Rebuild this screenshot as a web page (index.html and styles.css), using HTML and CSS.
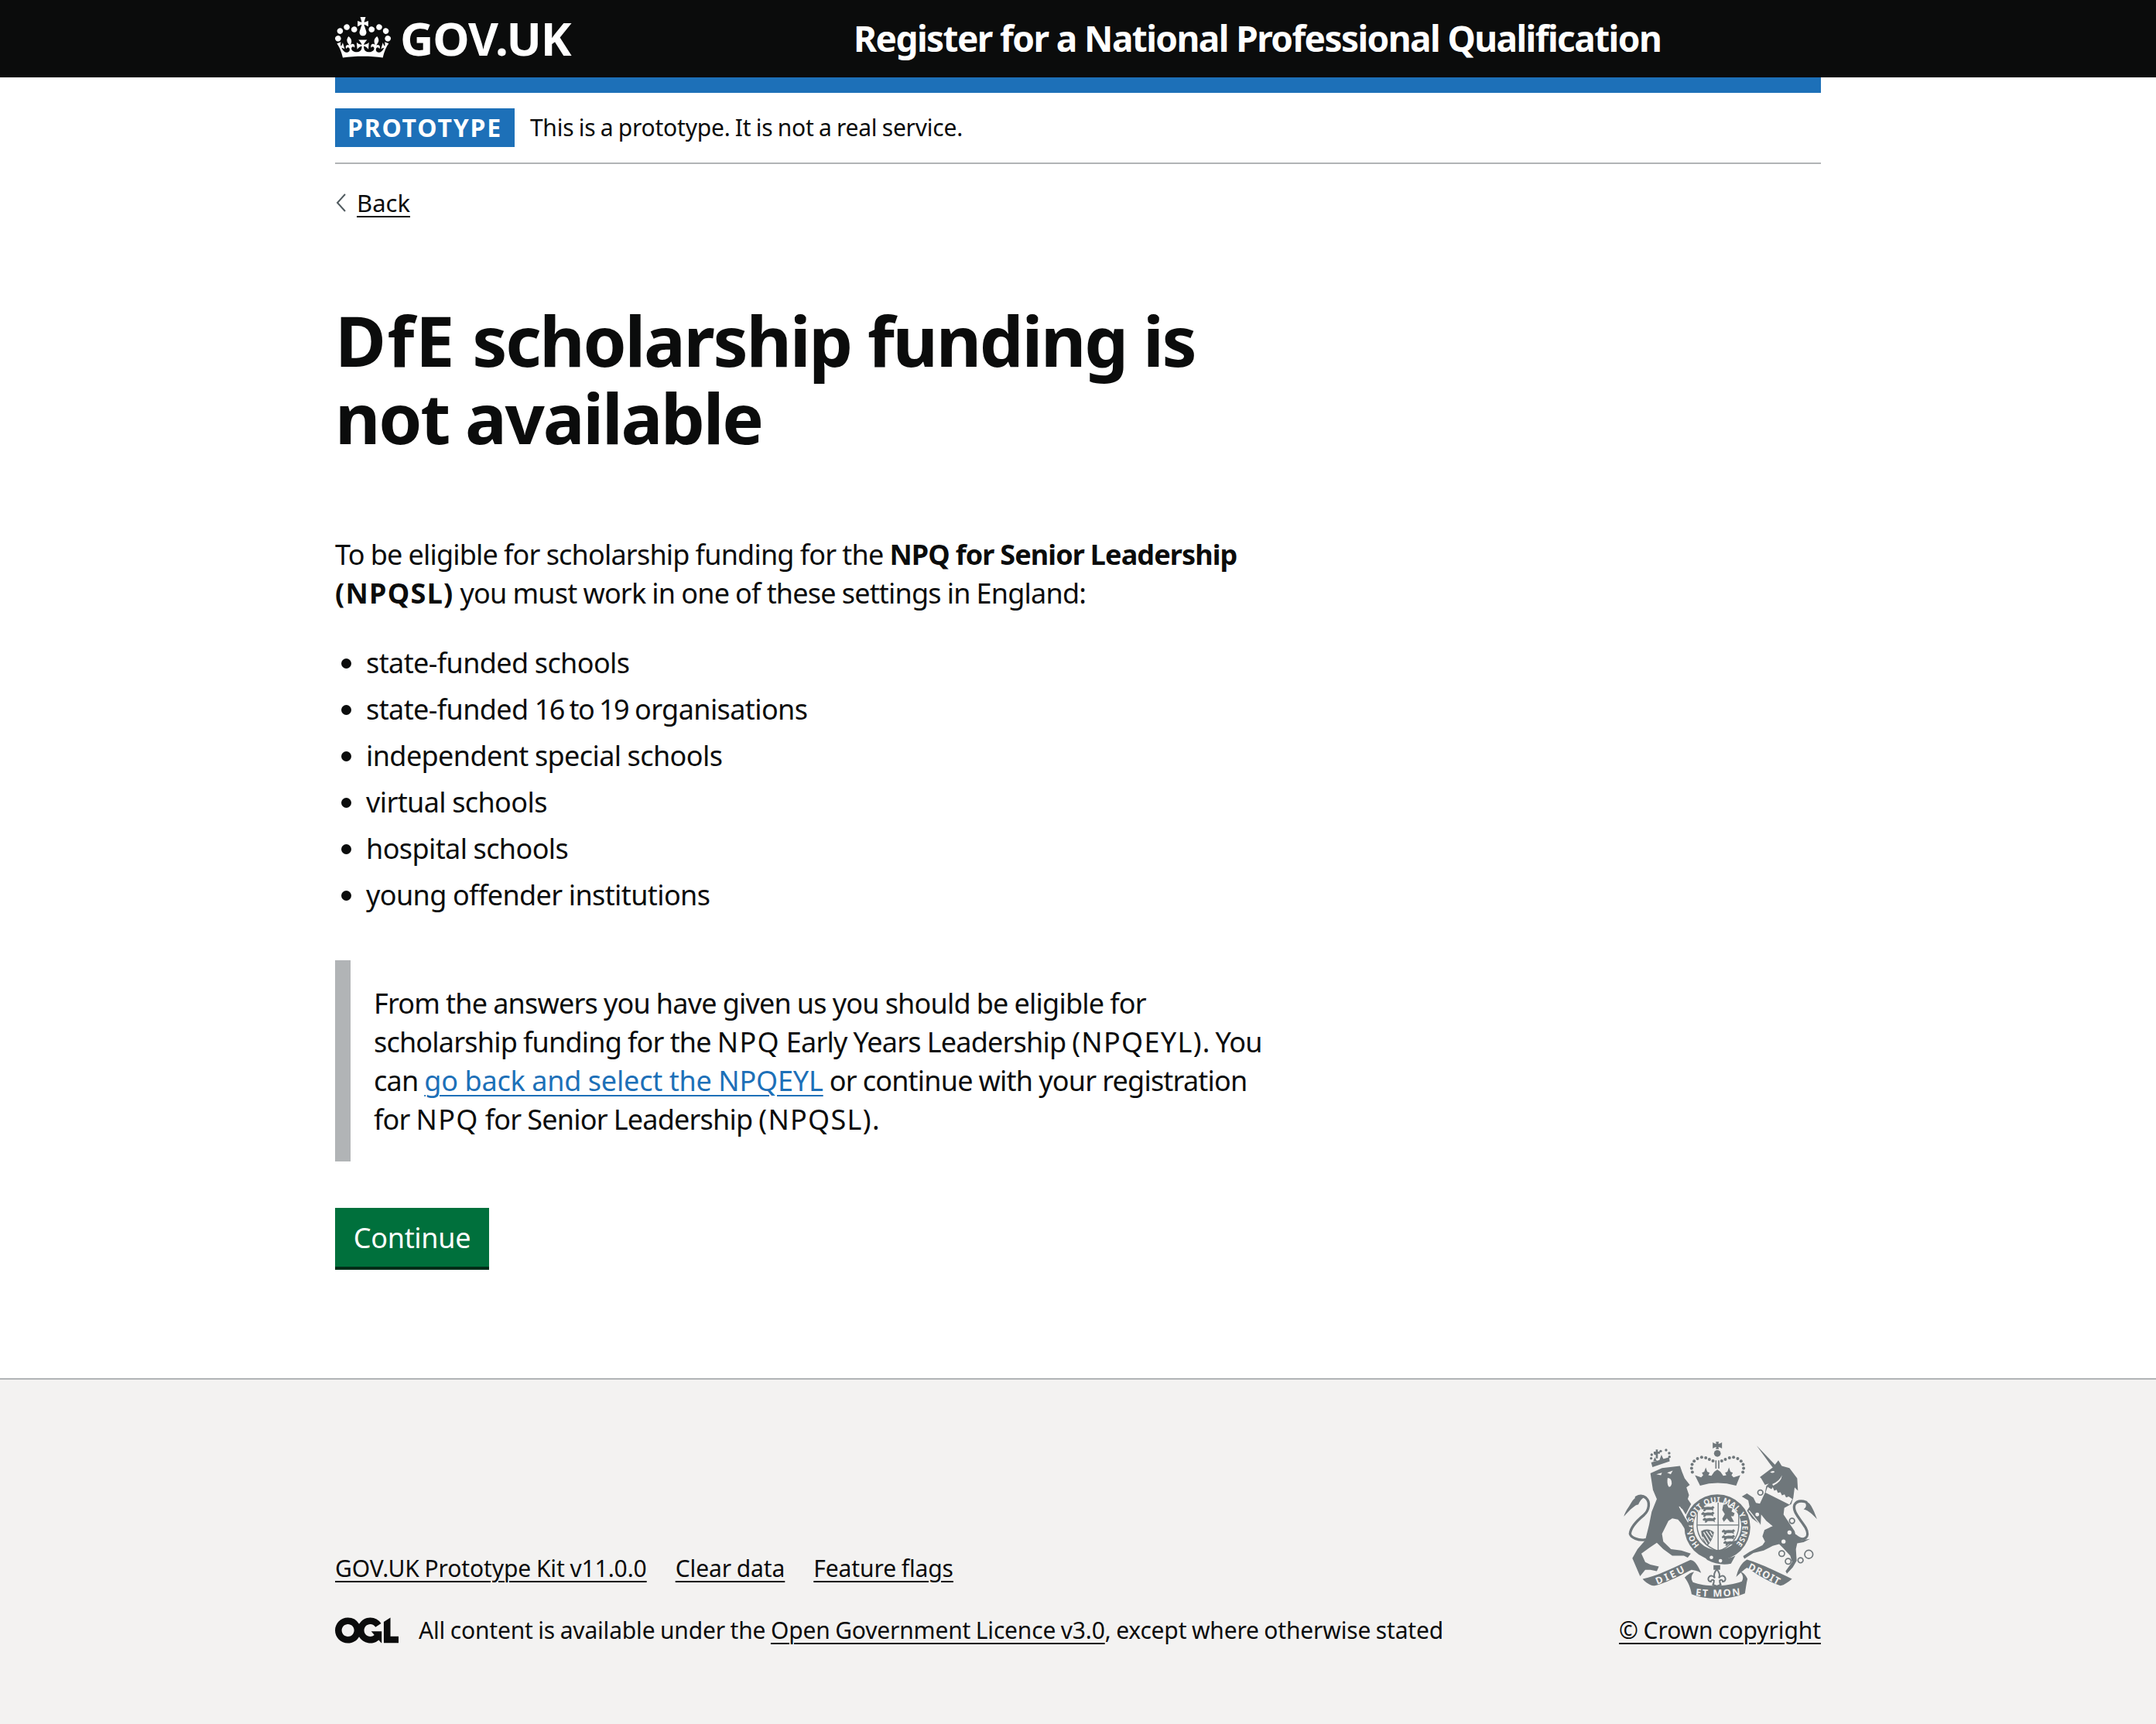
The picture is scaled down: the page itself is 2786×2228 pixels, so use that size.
FILE: index.html
```html
<!DOCTYPE html>
<html lang="en">
<head>
<meta charset="utf-8">
<title>DfE scholarship funding is not available</title>
<link rel="stylesheet" href="styles.css">
</head>
<body>
<header class="site-header">
  <div class="container header-inner">
    <a class="logo" href="#">
      <svg class="crown" viewBox="0 0 132 97" aria-hidden="true"><path fill="currentColor" fill-rule="evenodd" d="M25 30.2c3.5 1.5 7.7-.2 9.1-3.7 1.5-3.6-.2-7.8-3.9-9.2-3.6-1.4-7.6.3-9.1 3.9-1.4 3.5.3 7.5 3.9 9zM9 39.5c3.6 1.5 7.8-.2 9.2-3.7 1.5-3.6-.2-7.8-3.9-9.1-3.6-1.5-7.6.2-9.1 3.8-1.4 3.5.3 7.5 3.8 9zM4.4 57.2c3.5 1.5 7.7-.2 9.1-3.8 1.5-3.6-.2-7.7-3.9-9.1-3.5-1.5-7.6.3-9.1 3.8-1.4 3.5.3 7.6 3.9 9.1zm38.3-21.4c3.5 1.5 7.7-.2 9.1-3.8 1.5-3.6-.2-7.7-3.9-9.1-3.6-1.5-7.6.3-9.1 3.8-1.3 3.6.4 7.7 3.9 9.1zm64.4-5.6c-3.6 1.5-7.8-.2-9.1-3.7-1.5-3.6.2-7.8 3.8-9.2 3.6-1.4 7.7.3 9.2 3.9 1.3 3.5-.4 7.5-3.9 9zm15.9 9.3c-3.6 1.5-7.7-.2-9.1-3.7-1.5-3.6.2-7.8 3.7-9.1 3.6-1.5 7.7.2 9.2 3.8 1.5 3.5-.3 7.5-3.8 9zm4.7 17.7c-3.6 1.5-7.8-.2-9.2-3.8-1.5-3.6.2-7.7 3.9-9.1 3.6-1.5 7.7.3 9.2 3.8 1.3 3.5-.4 7.6-3.9 9.1zM89.3 35.8c-3.6 1.5-7.8-.2-9.2-3.8-1.4-3.6.2-7.7 3.9-9.1 3.6-1.5 7.7.3 9.2 3.8 1.4 3.6-.3 7.7-3.9 9.1zM69.7 17.7l8.9 4.7V9.3l-8.9 2.8c-.2-.3-.5-.6-.9-.9L72.4 0H59.6l3.5 11.2c-.3.3-.6.5-.9.9l-8.8-2.8v13.1l8.8-4.7c.3.3.6.7.9.9l-5 15.4v.1c-.2.8-.4 1.6-.4 2.4 0 4.1 3.1 7.5 7 8.1h.2c.3 0 .7.1 1 .1.4 0 .7 0 1-.1h.2c4-.6 7.1-4.1 7.1-8.1 0-.8-.1-1.7-.4-2.4V34l-5.1-15.4c.4-.2.7-.6 1-.9zM66 92.8c16.9 0 32.8 1.1 47.1 3.2 4-16.9 8.9-26.7 14-33.5l-9.6-3.4c1 4.9 1.1 7.2 0 10.2-1.5-1.4-3-4.3-4.2-8.7L108.6 76c2.8-2 5-3.2 7.5-3.3-4.4 9.4-10 11.9-13.6 11.2-4.3-.8-6.3-4.6-5.6-7.9 1-4.7 5.7-5.9 8-.5 4.3-8.7-3-11.4-7.6-8.8 7.1-7.2 7.9-13.5 2.1-21.1-8 6.1-8.1 12.3-4.5 20.8-4.7-5.4-12.1-2.5-9.5 6.2 3.4-5.2 7.9-2 7.2 3.1-.6 4.3-6.4 7.8-13.5 7.2-10.3-.9-10.9-8-11.2-13.8 2.5-.5 7.1 1.8 11 7.3L80.2 60c-4.1 4.4-8 5.3-12.3 5.4 1.4-4.4 8-11.6 8-11.6H55.5s6.4 7.2 7.9 11.6c-4.2-.1-8-1-12.3-5.4l1.4 16.4c3.9-5.5 8.5-7.7 10.9-7.3-.3 5.8-.9 12.8-11.1 13.8-7.2.6-12.9-2.9-13.5-7.2-.7-5 3.8-8.3 7.1-3.1 2.7-8.7-4.6-11.6-9.4-6.2 3.7-8.5 3.6-14.7-4.6-20.8-5.8 7.6-5 13.9 2.2 21.1-4.7-2.6-11.9.1-7.7 8.8 2.3-5.5 7.1-4.2 8.1.5.7 3.3-1.3 7.1-5.7 7.9-3.5.7-9-1.8-13.5-11.2 2.5.1 4.7 1.3 7.5 3.3l-4.7-15.4c-1.2 4.4-2.7 7.2-4.3 8.7-1.1-3-.9-5.3 0-10.2l-9.5 3.4c5 6.9 9.9 16.7 14 33.5 14.8-2.1 30.8-3.2 47.7-3.2z"/></svg>
      <span class="logotype">GOV.UK</span>
    </a>
    <a class="service-name" href="#">Register for a National Professional Qualification</a>
  </div>
</header>
<div class="container">
  <div class="header-rule"></div>
  <div class="phase-banner">
    <strong class="tag">PROTOTYPE</strong>
    <span class="phase-text">This is a prototype. It is not a real service.</span>
  </div>
  <a class="back-link" href="#"><svg class="chevron" viewBox="0 0 14 24" aria-hidden="true"><path d="M13 1 3 12l10 11"/></svg><span class="back-text">Back</span></a>
  <main class="main">
    <div class="two-thirds">
      <h1 class="heading"><span class="caps-lg">DfE</span> scholarship funding is<br>not available</h1>
      <p class="body">To be eligible for scholarship funding for the <strong>NPQ for Senior Leadership<br><span class="caps">(NPQSL)</span></strong> you must work in one of these settings in England:</p>
      <ul class="list">
        <li>state-funded schools</li>
        <li>state-funded <span class="digits">16 to 19</span> organisations</li>
        <li>independent special schools</li>
        <li>virtual schools</li>
        <li>hospital schools</li>
        <li>young offender institutions</li>
      </ul>
      <div class="inset">From the answers you have given us you should be eligible for<br>scholarship funding for the <span class="caps">NPQ</span> Early Years Leadership <span class="caps">(NPQEYL)</span>. You<br>can <a class="link" href="#">go back and select the NPQEYL</a> or continue with your registration<br>for <span class="caps">NPQ</span> for Senior Leadership <span class="caps">(NPQSL)</span>.</div>
      <a class="button" href="#">Continue</a>
    </div>
  </main>
</div>
<footer class="footer">
  <div class="container footer-inner">
    <div class="footer-meta">
      <ul class="footer-links">
        <li><a href="#">GOV.UK Prototype Kit v11.0.0</a></li>
        <li><a href="#">Clear data</a></li>
        <li><a href="#">Feature flags</a></li>
      </ul>
      <div class="licence">
        <svg class="ogl" viewBox="0 0 483.2 195.7" aria-hidden="true"><path fill="currentColor" d="M421.5 142.8V.1l-50.7 32.3v161.1h112.4v-50.7zm-122.3-9.6A47.12 47.12 0 0 1 221 97.8c0-26 21.1-47.1 47.1-47.1 16.7 0 31.4 8.7 39.7 21.8l42.7-27.2A97.63 97.63 0 0 0 268.1 0c-36.5 0-68.3 20.1-85.1 49.7A98 98 0 0 0 97.8 0C43.9 0 0 43.9 0 97.8s43.9 97.8 97.8 97.8c36.5 0 68.3-20.1 85.1-49.7a97.76 97.76 0 0 0 149.6 25.4l19.4 22.2h3v-87.8h-80l24.3 27.5zM97.8 145c-26 0-47.1-21.1-47.1-47.1s21.1-47.1 47.1-47.1 47.2 21 47.2 47S123.8 145 97.8 145"/></svg>
        <span>All content is available under the <a href="#">Open Government Licence v3.0</a>, except where otherwise stated</span>
      </div>
    </div>
    <div class="copyright">
      <svg class="crest" viewBox="100 60 770 640" aria-hidden="true">
        <defs>
          <path id="garter" d="M406 474A97 97 0 1 1 544 474"/>
          <path id="rib-l" d="M242 628Q300 605 360 572"/>
          <path id="rib-c" d="M390 670Q470 680 565 668"/>
          <path id="rib-r" d="M592 568Q650 595 708 628"/>
          <path id="sl" d="M0 8 8 1 14 5 26 3 40 4 46 0 52 6 46 12 48 19 40 15 20 15 14 21 8 20 10 13 2 13z"/>
        </defs>
        <!-- royal crown -->
        <g class="c-fill" transform="translate(330 45)">
          <path d="M139 28h12l-2 8 8-2 6-4v24l-6-4-8-2 2 8h-12l2-8-8 2-6 4V30l6 4 8 2z"/>
          <circle cx="145" cy="73" r="13"/>
          <rect x="137" y="100" width="5" height="32"/><rect x="148" y="100" width="5" height="32"/>
          <path d="M58 158 82 166 90 158 85 148 94 144 100 128 106 144 115 148 110 158 122 160 133 144 145 136 157 144 168 160 180 158 175 148 184 144 190 128 196 144 205 148 200 158 208 166 234 158 218 198Q145 178 78 198z"/>
          <circle cx="48" cy="146" r="6"/><circle cx="45" cy="131" r="6"/><circle cx="47" cy="116" r="6"/><circle cx="55" cy="103" r="6"/><circle cx="68" cy="93" r="6"/><circle cx="84" cy="88" r="6"/><circle cx="100" cy="90" r="6"/><circle cx="114" cy="96" r="6"/><circle cx="128" cy="102" r="6"/><circle cx="162" cy="102" r="6"/><circle cx="176" cy="96" r="6"/><circle cx="192" cy="90" r="6"/><circle cx="208" cy="88" r="6"/><circle cx="224" cy="93" r="6"/><circle cx="237" cy="103" r="6"/><circle cx="245" cy="116" r="6"/><circle cx="247" cy="131" r="6"/><circle cx="244" cy="146" r="6"/>
        </g>
        <!-- garter and shield -->
        <circle class="c-fill" cx="475" cy="405" r="128"/>
        <circle class="c-bg" cx="475" cy="400" r="93"/>
        <path class="c-fill" d="M410 505C450 530 510 535 545 515L528 546C500 552 465 548 436 532z"/>
        <path class="c-line" d="M398 320Q440 305 478 303 516 305 558 320V400Q555 468 478 498 400 468 396 400zM478 303V498M396 396H558"/>
        <g class="c-fill">
          <use href="#sl" x="412" y="322"/><use href="#sl" x="412" y="344"/><use href="#sl" x="418" y="366"/>
          <use href="#sl" x="492" y="412"/><use href="#sl" x="492" y="434"/><use href="#sl" x="498" y="456"/>
          <path d="M498 318 512 314 518 328 534 332 530 344 542 350 538 362 528 362 540 384H524L512 370 500 384 494 372 504 354 494 338z"/>
          <path d="M412 420Q438 404 462 424 456 456 436 478 414 456 412 420z"/>
        </g>
        <path class="c-bg-line" d="M422 424 446 464M432 420 452 448M418 442 436 470M446 420 456 436"/>
        <text class="c-text c-garter"><textPath href="#garter" textLength="450">HONI SOIT QUI MAL Y PENSE</textPath></text>
        <circle class="c-bg" cx="452" cy="522" r="7"/><circle class="c-bg" cx="487" cy="535" r="7"/>
        <!-- lion -->
        <g transform="translate(90 45)">
          <g class="c-fill">
            <path d="M125 150 170 130 240 122 248 145 258 170 278 195 265 205 275 235 270 250 283 270 262 310 250 290 235 278 258 320 268 340 282 370 272 383 262 372 245 345 232 330 210 325 195 335 170 385 175 415 205 445 245 450 282 462 270 478 255 470 210 470 175 445 150 420 120 440 90 462 105 495 125 505 158 512 150 530 125 525 105 525 85 550 55 480 75 445 105 410 120 350 130 300 150 250 135 215 128 170z"/>
            <path d="M133 126 200 104 198 88 128 108z"/>
            <path d="M22 318C28 296 40 284 52 262 66 240 90 232 108 240 92 246 84 258 78 272 66 272 48 290 22 318z"/>
            <circle cx="128" cy="92" r="5"/><circle cx="130" cy="78" r="5"/><circle cx="144" cy="74" r="5"/><circle cx="165" cy="64" r="5"/><circle cx="186" cy="60" r="5"/><circle cx="198" cy="72" r="5"/><circle cx="199" cy="86" r="5"/>
            <path d="M146 58h8v8h8v8h-8v18h-8V74h-8v-8h8z"/>
            <path d="M160 100 168 78 176 96zM136 104 142 88 150 102z"/>
          </g>
          <path class="c-stroke" d="M104 408C80 412 48 400 46 385 48 360 72 335 100 312 122 292 124 260 108 246 96 236 82 236 70 244"/>
          <path class="c-bg" d="M148 154 170 148 166 158zM190 148 212 140 204 154zM192 168Q208 168 208 190 204 206 196 202 188 190 192 168z"/>
          <path class="c-bg-line" d="M238 280 272 340"/>
        </g>
        <!-- unicorn -->
        <g transform="translate(540 45)">
          <g class="c-fill">
            <path d="M87 42 162 120 150 128z"/>
            <path d="M100 165 120 150 150 128 172 100 185 122 215 130 245 170 248 218 235 205 230 245 222 270 195 285 192 310 212 340 235 375 240 395 262 410 295 405 270 418 245 422 240 445 243 490 228 515 205 540 200 530 225 495 218 470 190 440 175 425 150 432 115 450 75 460 40 482 35 472 60 455 110 430 120 415 110 395 118 370 150 355 125 335 105 310 103 350 70 325 50 295 60 280 55 255 30 240 50 228 75 245 85 265 100 268 120 225 125 200 135 190 120 195 105 170z"/>
            <path d="M270 258C295 258 305 285 322 328 305 310 290 295 270 290 285 280 280 268 270 258z"/>
          </g>
          <path class="c-stroke" d="M238 392C270 420 298 400 278 362 258 328 225 300 235 272 245 255 262 256 280 262"/>
          <path class="c-bg" d="M122 225 130 203 145 212 150 204 156 218 165 214 170 226 180 224 186 236 196 232 202 244 212 240 226 250 215 272z"/>
          <path class="c-bg" d="M140 146Q150 138 158 144 150 152 140 146zM148 192Q176 182 186 158 184 184 152 198z"/>
          <circle class="c-bg" cx="215" cy="380" r="8"/><circle class="c-bg" cx="192" cy="415" r="8"/>
          <path class="c-bg-line" d="M58 295 100 348"/>
          <circle class="c-ring" cx="102" cy="225" r="10"/><circle class="c-ring" cx="90" cy="310" r="10"/><circle class="c-ring" cx="225" cy="335" r="10"/><circle class="c-ring" cx="185" cy="462" r="11"/><circle class="c-ring" cx="210" cy="492" r="11"/><circle class="c-ring" cx="258" cy="488" r="10"/><circle class="c-ring" cx="290" cy="465" r="16"/>
        </g>
        <!-- ribbon and fleur -->
        <g transform="translate(180 510)">
          <path class="c-fill" d="M5 95C60 85 130 50 190 22 210 22 225 55 232 72 215 62 205 62 195 60 165 75 100 110 52 122 35 122 15 108 5 95z"/>
          <path class="c-fill" d="M168 90C180 78 195 68 205 68 195 80 190 92 200 108 250 128 340 125 390 105 398 92 395 80 382 65 395 70 405 80 412 95 408 110 405 135 402 152 340 178 250 178 195 155 192 130 180 105 168 90z"/>
          <path class="c-fill" d="M368 88C375 60 385 35 410 20 470 38 530 70 585 95 570 108 555 118 540 122 490 105 445 75 410 52 395 62 385 72 368 88z"/>
          <path class="c-fill" d="M280 42h26v18h-26z"/>
          <path class="c-fleur" d="M293 58C302 68 306 80 301 92 307 84 316 80 322 86 330 94 326 106 316 106 316 100 310 96 304 102 304 110 306 114 308 118L293 124 278 118C280 114 282 110 282 102 276 96 270 100 270 106 260 106 256 94 264 86 270 80 279 84 285 92 280 80 284 68 293 58z"/>
        </g>
        <text class="c-text c-motto"><textPath href="#rib-l" textLength="120">DIEU</textPath></text>
        <text class="c-text c-motto"><textPath href="#rib-c" textLength="175">ET MON</textPath></text>
        <text class="c-text c-motto"><textPath href="#rib-r" textLength="132">DROIT</textPath></text>
      </svg>
      <a href="#">© Crown copyright</a>
    </div>
  </div>
</footer>
</body>
</html>
```

FILE: styles.css
```css
* { box-sizing: border-box; }
html, body { margin: 0; padding: 0; }
body {
  font-family: "Noto Sans", "Liberation Sans", sans-serif;
  color: #0b0c0c;
  background: #fff;
  min-height: 2228px;
  display: flex;
  flex-direction: column;
}
a { color: inherit; }
.container { width: 1920px; margin: 0 auto; }

.site-header { background: #0b0c0c; height: 100px; color: #fff; }
.header-inner { display: flex; align-items: center; height: 100px; }
.logo { width: 670px; display: flex; align-items: center; gap: 12px; color: #fff; text-decoration: none; }
.crown { width: 72px; height: 53px; display: block; margin-top: -4px; }
.logotype { font-size: 60px; font-weight: 700; line-height: 60px; letter-spacing: -1.1px; margin-top: -2px; }
.service-name { font-size: 46px; font-weight: 700; line-height: 60px; margin-top: -3px; color: #fff; text-decoration: none; white-space: nowrap; letter-spacing: -1.6px; }

.header-rule { height: 20px; background: #1d70b8; }
.phase-banner { display: flex; align-items: center; padding: 20px 0; border-bottom: 2px solid #b1b4b6; height: 92px; }
.tag { background: #1d70b8; color: #fff; font-size: 32px; font-weight: 700; letter-spacing: 1.8px; line-height: 50px; height: 50px; padding: 0 16px; margin-right: 20px; white-space: nowrap; }
.phase-text { font-size: 30px; line-height: 40px; letter-spacing: -0.2px; word-spacing: -1.3px; }

.back-link { display: inline-flex; align-items: center; gap: 14px; margin-top: 30px; font-size: 31px; line-height: 40px; text-decoration: none; }
.chevron { width: 14px; height: 24px; display: block; }
.chevron path { fill: none; stroke: #505a5f; stroke-width: 2; }
.back-text { text-decoration: underline; text-decoration-thickness: 2px; text-underline-offset: 5px; }

.main { padding-top: 107px; }
.two-thirds { width: 1260px; }
.heading { margin: 0 0 103px; font-size: 90px; font-weight: 700; line-height: 100px; letter-spacing: -2.3px; white-space: nowrap; }
.caps-lg { letter-spacing: 1.7px; }
.body, .list, .inset { font-size: 36px; line-height: 50px; letter-spacing: -0.8px; word-spacing: -0.6px; white-space: nowrap; }
.body { margin: 0 0 40px; }
.body strong { letter-spacing: -0.9px; }
.caps, .body strong .caps { letter-spacing: 1.3px; }
.list { margin: 0 0 59px; padding: 0 0 0 40px; letter-spacing: -0.6px; }
.list li { margin-bottom: 10px; }
.list li:last-child { margin-bottom: 0; }
.digits { letter-spacing: -1.7px; }
.inset { border-left: 20px solid #b1b4b6; padding: 31px 30px 29px; margin-bottom: 60px; }
.link { color: #1d70b8; letter-spacing: -0.18px; text-decoration-thickness: 2px; text-underline-offset: 5px; }
.button { display: block; width: 199px; height: 76px; background: #00703c; box-shadow: 0 4px 0 #002d18; color: #fff; font-size: 36px; line-height: 78px; letter-spacing: -0.3px; text-align: center; text-decoration: none; margin-bottom: 144px; }

.footer { flex: 1; background: #f3f2f1; border-top: 2px solid #b1b4b6; font-size: 30px; letter-spacing: -0.1px; word-spacing: -1px; }
.footer-inner { display: flex; justify-content: space-between; align-items: flex-start; padding-top: 76px; }
.footer-meta { padding-top: 148px; }
.footer-links { list-style: none; display: flex; gap: 37px; margin: 0 0 40px; padding: 0; line-height: 40px; }
.footer a { text-decoration-thickness: 2px; text-underline-offset: 5px; }
.licence { display: flex; align-items: center; gap: 26px; line-height: 40px; letter-spacing: -0.18px; }
.ogl { width: 82px; height: 34px; display: block; }
.copyright { display: flex; flex-direction: column; align-items: flex-end; line-height: 40px; }
.crest { width: 257px; height: 213px; display: block; margin: 0 2px 15px 0; }

.c-fill { fill: #6f777b; }
.c-bg { fill: #f3f2f1; }
.c-line { fill: none; stroke: #6f777b; stroke-width: 4; }
.c-stroke { fill: none; stroke: #6f777b; stroke-width: 10; stroke-linecap: round; }
.c-bg-line { fill: none; stroke: #f3f2f1; stroke-width: 4; }
.c-ring { fill: #f3f2f1; stroke: #6f777b; stroke-width: 5; }
.c-fleur { fill: #f3f2f1; stroke: #6f777b; stroke-width: 6; }
.c-text { fill: #f3f2f1; font-family: "Noto Sans", sans-serif; font-weight: 700; letter-spacing: 0; word-spacing: 0; }
.c-garter { font-size: 30px; }
.c-motto { font-size: 38px; }
```
